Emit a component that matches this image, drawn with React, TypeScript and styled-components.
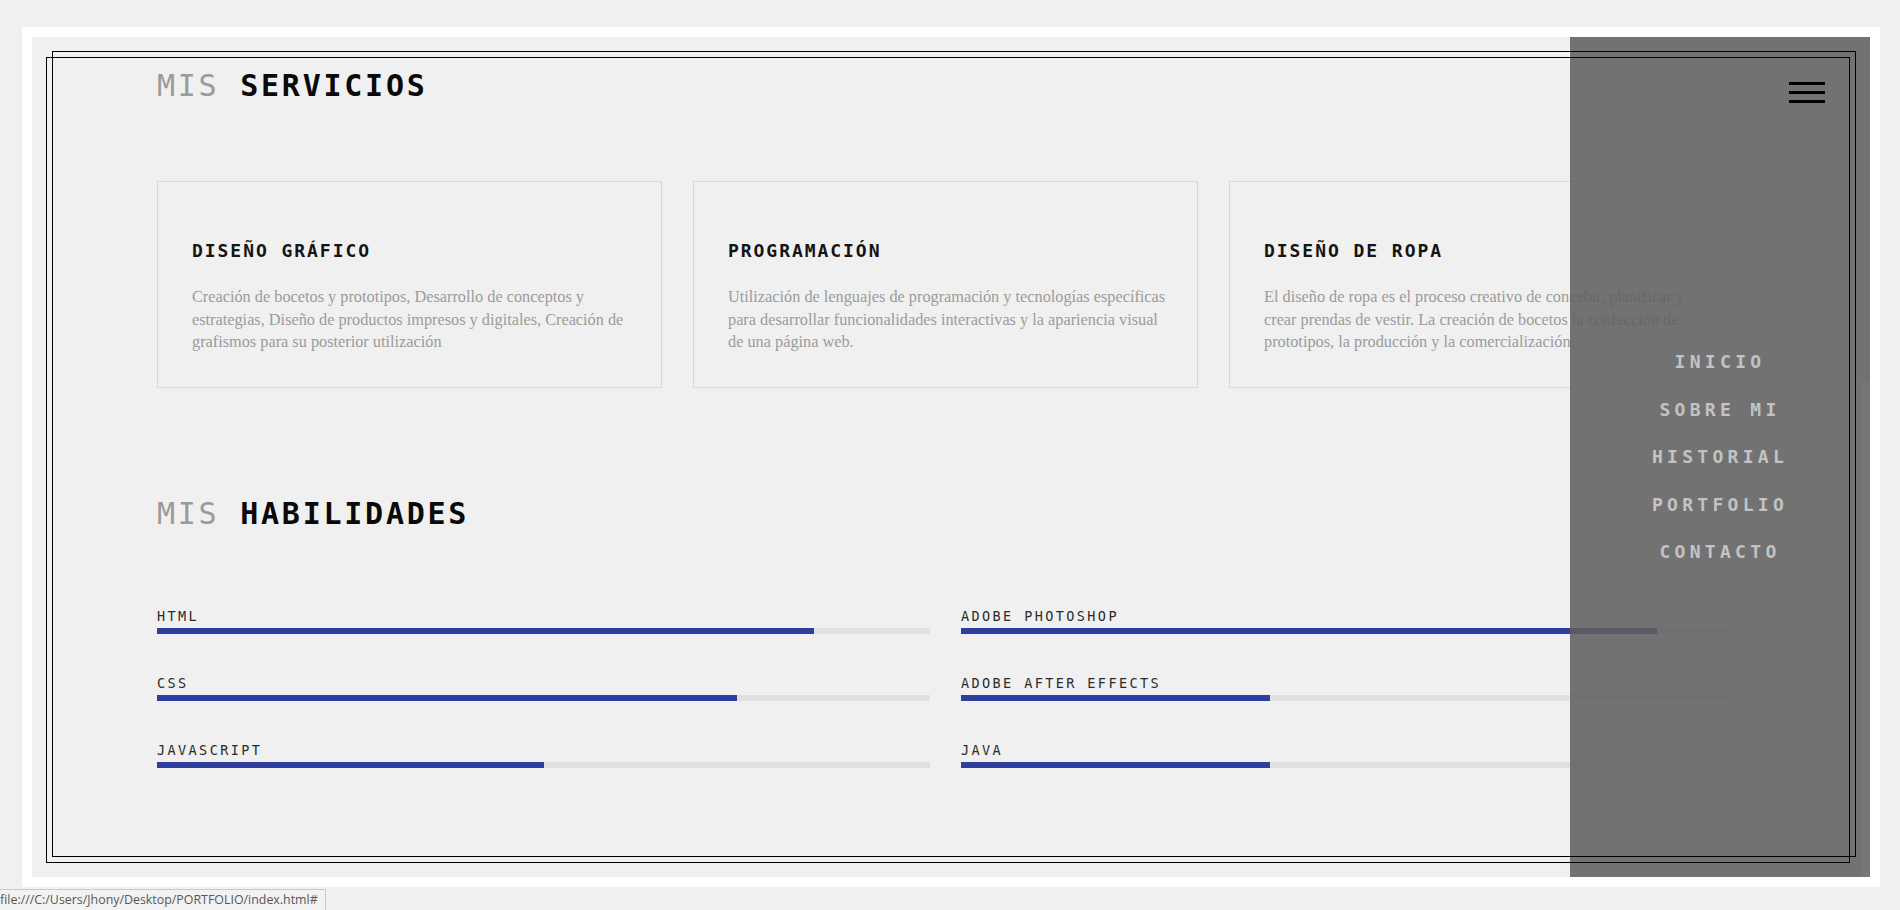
import React from "react";
import styled, { createGlobalStyle } from "styled-components";

const GlobalStyle = createGlobalStyle`
  html, body {
    margin: 0;
    padding: 0;
    background: #f0f0f0;
  }
  body {
    width: 1900px;
    height: 910px;
    overflow: hidden;
  }
  * { box-sizing: border-box; }
`;

const MONO = `"DejaVu Sans Mono", "Liberation Mono", monospace`;

const Page = styled.div`
  height: 910px;
  padding: 27px 20px 23px 22px;
`;

const Frame = styled.div`
  position: relative;
  height: 100%;
  border: 10px solid #ffffff;
  background: #f0f0f0;
  overflow: hidden;
`;

const DecoBox = styled.div<{ $left: number; $top: number }>`
  position: absolute;
  left: ${(p) => p.$left}px;
  top: ${(p) => p.$top}px;
  width: 1804px;
  height: 806px;
  border: 1px solid #000;
  pointer-events: none;
  z-index: 3;
`;

const Content = styled.main`
  display: flex;
  flex-direction: column;
  align-items: flex-start;
  padding: 34px 0 0 125px;
  width: 1701px;
`;

const SectionTitle = styled.h2<{ $gap?: number }>`
  margin: ${(p) => p.$gap ?? 0}px 0 0;
  font-family: ${MONO};
  font-size: 30px;
  line-height: 30px;
  letter-spacing: 2.75px;
  font-weight: 700;
  color: #0a0a0a;
  white-space: pre;
`;

const Light = styled.span`
  font-weight: 400;
  color: #9a9a9a;
`;

const Cards = styled.section`
  display: grid;
  grid-template-columns: repeat(3, 505px);
  column-gap: 31px;
  margin-top: 80px;
`;

const Card = styled.article`
  border: 1px solid #d9d9d9;
  padding: 60px 30px 33px 34px;
`;

const CardTitle = styled.h3`
  margin: 0 0 26px;
  font-family: ${MONO};
  font-size: 18px;
  line-height: 18px;
  letter-spacing: 1.95px;
  font-weight: 700;
  color: #141414;
`;

const CardText = styled.p`
  margin: 0;
  font-family: "Liberation Serif", "Times New Roman", serif;
  font-size: 16.3px;
  line-height: 22.5px;
  color: #9b9b9b;
`;

const Skills = styled.section`
  display: grid;
  grid-template-columns: repeat(2, 773px);
  column-gap: 31px;
  row-gap: 42px;
  margin-top: 80px;
`;

const Skill = styled.div`
  display: flex;
  flex-direction: column;
  gap: 5px;
`;

const SkillLabel = styled.span`
  font-family: ${MONO};
  font-size: 13.5px;
  line-height: 14px;
  letter-spacing: 2.4px;
  color: #2b2b2b;
`;

const Track = styled.div`
  height: 6px;
  background: #e0e0e0;
`;

const Fill = styled.div`
  height: 100%;
  background: #303f9f;
`;

const Overlay = styled.aside`
  position: absolute;
  top: 0;
  right: 0;
  bottom: 0;
  width: 300px;
  z-index: 2;
  background: rgba(96, 96, 96, 0.88);
  display: flex;
  flex-direction: column;
  padding: 45px 45px 0;
`;

const ScrollStrip = styled.div`
  position: absolute;
  right: 0;
  top: 345px;
  bottom: 0;
  width: 8px;
  background: rgba(255, 255, 255, 0.035);
`;

const Burger = styled.button`
  align-self: flex-end;
  width: 36px;
  padding: 0;
  border: 0;
  background: transparent;
  display: flex;
  flex-direction: column;
  gap: 6px;
  cursor: pointer;
`;

const BurgerBar = styled.span`
  display: block;
  height: 3px;
  width: 100%;
  background: #000;
`;

const Nav = styled.ul`
  list-style: none;
  margin: 235px 0 0;
  padding: 0;
`;

const NavItem = styled.li`
  font-family: ${MONO};
  font-size: 18px;
  line-height: 47.6px;
  letter-spacing: 4.3px;
  font-weight: 700;
  color: #c3c3c3;
  text-align: center;
`;

const Status = styled.div`
  position: fixed;
  left: 0;
  bottom: 0;
  width: 326px;
  height: 21px;
  background: #f2f2f2;
  border-top: 1px solid #cacaca;
  border-right: 1px solid #cacaca;
  font-family: "Open Sans", "Noto Sans", sans-serif;
  font-size: 12.4px;
  line-height: 20px;
  color: #575757;
  white-space: nowrap;
  overflow: hidden;
  z-index: 10;
`;

const services = [
  {
    title: "DISEÑO GRÁFICO",
    text: "Creación de bocetos y prototipos, Desarrollo de conceptos y estrategias, Diseño de productos impresos y digitales, Creación de grafismos para su posterior utilización",
  },
  {
    title: "PROGRAMACIÓN",
    text: "Utilización de lenguajes de programación y tecnologías específicas para desarrollar funcionalidades interactivas y la apariencia visual de una página web.",
  },
  {
    title: "DISEÑO DE ROPA",
    text: "El diseño de ropa es el proceso creativo de concebir, planificar y crear prendas de vestir. La creación de bocetos la confección de prototipos, la producción y la comercialización.",
  },
];

const skills = [
  { name: "HTML", pct: 85 },
  { name: "ADOBE PHOTOSHOP", pct: 90 },
  { name: "CSS", pct: 75 },
  { name: "ADOBE AFTER EFFECTS", pct: 40 },
  { name: "JAVASCRIPT", pct: 50 },
  { name: "JAVA", pct: 40 },
];

const navItems = ["INICIO", "SOBRE MI", "HISTORIAL", "PORTFOLIO", "CONTACTO"];

export default function App() {
  return (
    <>
      <GlobalStyle />
      <Page>
        <Frame>
          <Content>
            <SectionTitle>
              <Light>MIS </Light>SERVICIOS
            </SectionTitle>
            <Cards>
              {services.map((s) => (
                <Card key={s.title}>
                  <CardTitle>{s.title}</CardTitle>
                  <CardText>{s.text}</CardText>
                </Card>
              ))}
            </Cards>
            <SectionTitle $gap={111}>
              <Light>MIS </Light>HABILIDADES
            </SectionTitle>
            <Skills>
              {skills.map((s) => (
                <Skill key={s.name}>
                  <SkillLabel>{s.name}</SkillLabel>
                  <Track>
                    <Fill style={{ width: `${s.pct}%` }} />
                  </Track>
                </Skill>
              ))}
            </Skills>
          </Content>

          <Overlay>
            <ScrollStrip />
            <Burger aria-label="menu">
              <BurgerBar />
              <BurgerBar />
              <BurgerBar />
            </Burger>
            <Nav>
              {navItems.map((n) => (
                <NavItem key={n}>{n}</NavItem>
              ))}
            </Nav>
          </Overlay>

          <DecoBox $left={20} $top={14} />
          <DecoBox $left={14} $top={20} />
        </Frame>
      </Page>
      <Status>file:///C:/Users/Jhony/Desktop/PORTFOLIO/index.html#</Status>
    </>
  );
}
